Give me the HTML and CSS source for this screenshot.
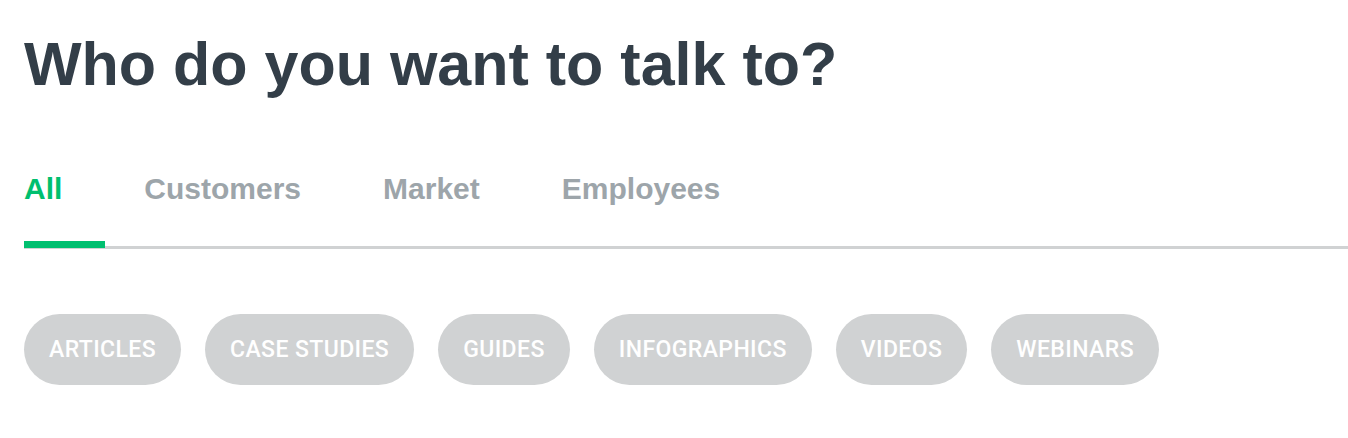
FILE: index.html
```html
<!DOCTYPE html>
<html lang="en">
<head>
  <meta charset="UTF-8">
  <title>Who do you want to talk to?</title>
  <meta name="viewport" content="width=device-width, initial-scale=1">
  <link rel="stylesheet" href="styles.css">
</head>
<body>
  <h1 class="title">Who do you want to talk to?</h1>

  <nav class="tabs">
    <a class="tab active" href="#">All</a>
    <a class="tab" href="#">Customers</a>
    <a class="tab" href="#">Market</a>
    <a class="tab" href="#">Employees</a>
  </nav>

  <div class="filters">
    <span class="pill">Articles</span>
    <span class="pill">Case Studies</span>
    <span class="pill">Guides</span>
    <span class="pill">Infographics</span>
    <span class="pill">Videos</span>
    <span class="pill">Webinars</span>
  </div>
</body>
</html>
```

FILE: styles.css
```css
body {
  margin: 0;
  padding: 0 0 0 24px;
  font-family: "Liberation Sans", Arial, sans-serif;
  background: #fff;
  color: #333e48;
}
.title {
  margin: 0;
  padding-top: 26px;
  font-size: 61px;
  line-height: 76px;
  font-weight: 700;
}
.tabs {
  display: flex;
  gap: 82px;
  margin-top: 70px;
  border-bottom: 3px solid #d0d2d3;
}
.tab {
  position: relative;
  padding-bottom: 40px;
  font-size: 30px;
  line-height: 34px;
  font-weight: 700;
  color: #9da5aa;
  text-decoration: none;
}
.tab.active {
  color: #00bf6f;
}
.tab.active::after {
  content: "";
  position: absolute;
  left: 0;
  bottom: -2px;
  width: 81px;
  height: 7px;
  background: #00bf6f;
}
.filters {
  display: flex;
  gap: 24px;
  margin-top: 65px;
}
.pill {
  height: 71px;
  line-height: 72px;
  padding: 0 25px;
  border-radius: 36px;
  background: #d0d2d3;
  color: #fff;
  font-family: Roboto, "Liberation Sans", sans-serif;
  font-weight: 500;
  font-size: 23px;
  letter-spacing: 0.4px;
  text-transform: uppercase;
}
```
